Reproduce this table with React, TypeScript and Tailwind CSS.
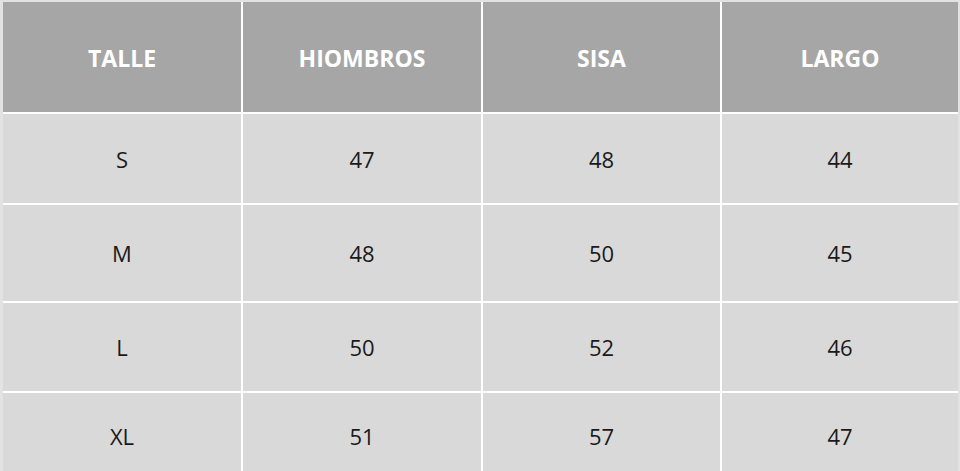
const headers = ["TALLE", "HIOMBROS", "SISA", "LARGO"];

const rows = [
  ["S", "47", "48", "44"],
  ["M", "48", "50", "45"],
  ["L", "50", "52", "46"],
  ["XL", "51", "57", "47"],
];

export default function App() {
  return (
    <div
      className="w-[960px] h-[471px] overflow-hidden bg-white"
      style={{ fontFamily: '"Open Sans", "Noto Sans", sans-serif' }}
    >
      <div className="border-t-2 border-l-[3px] border-r-2 border-[#e2e2e2] bg-white">
        <div className="grid grid-cols-[238px_238px_237px_236px] grid-rows-[110px_89px_96px_88px_86px] gap-[2px]">
          {headers.map((h) => (
            <div
              key={h}
              className="flex items-center justify-center pt-[3px] bg-[#a6a6a6] text-white font-bold text-[23px]"
            >
              {h}
            </div>
          ))}
          {rows.map((row) =>
            row.map((cell, i) => (
              <div
                key={row[0] + i}
                className="flex items-center justify-center pt-[1px] bg-[#d9d9d9] text-[#1a1a1a] text-[22px]"
              >
                {cell}
              </div>
            ))
          )}
        </div>
      </div>
    </div>
  );
}
